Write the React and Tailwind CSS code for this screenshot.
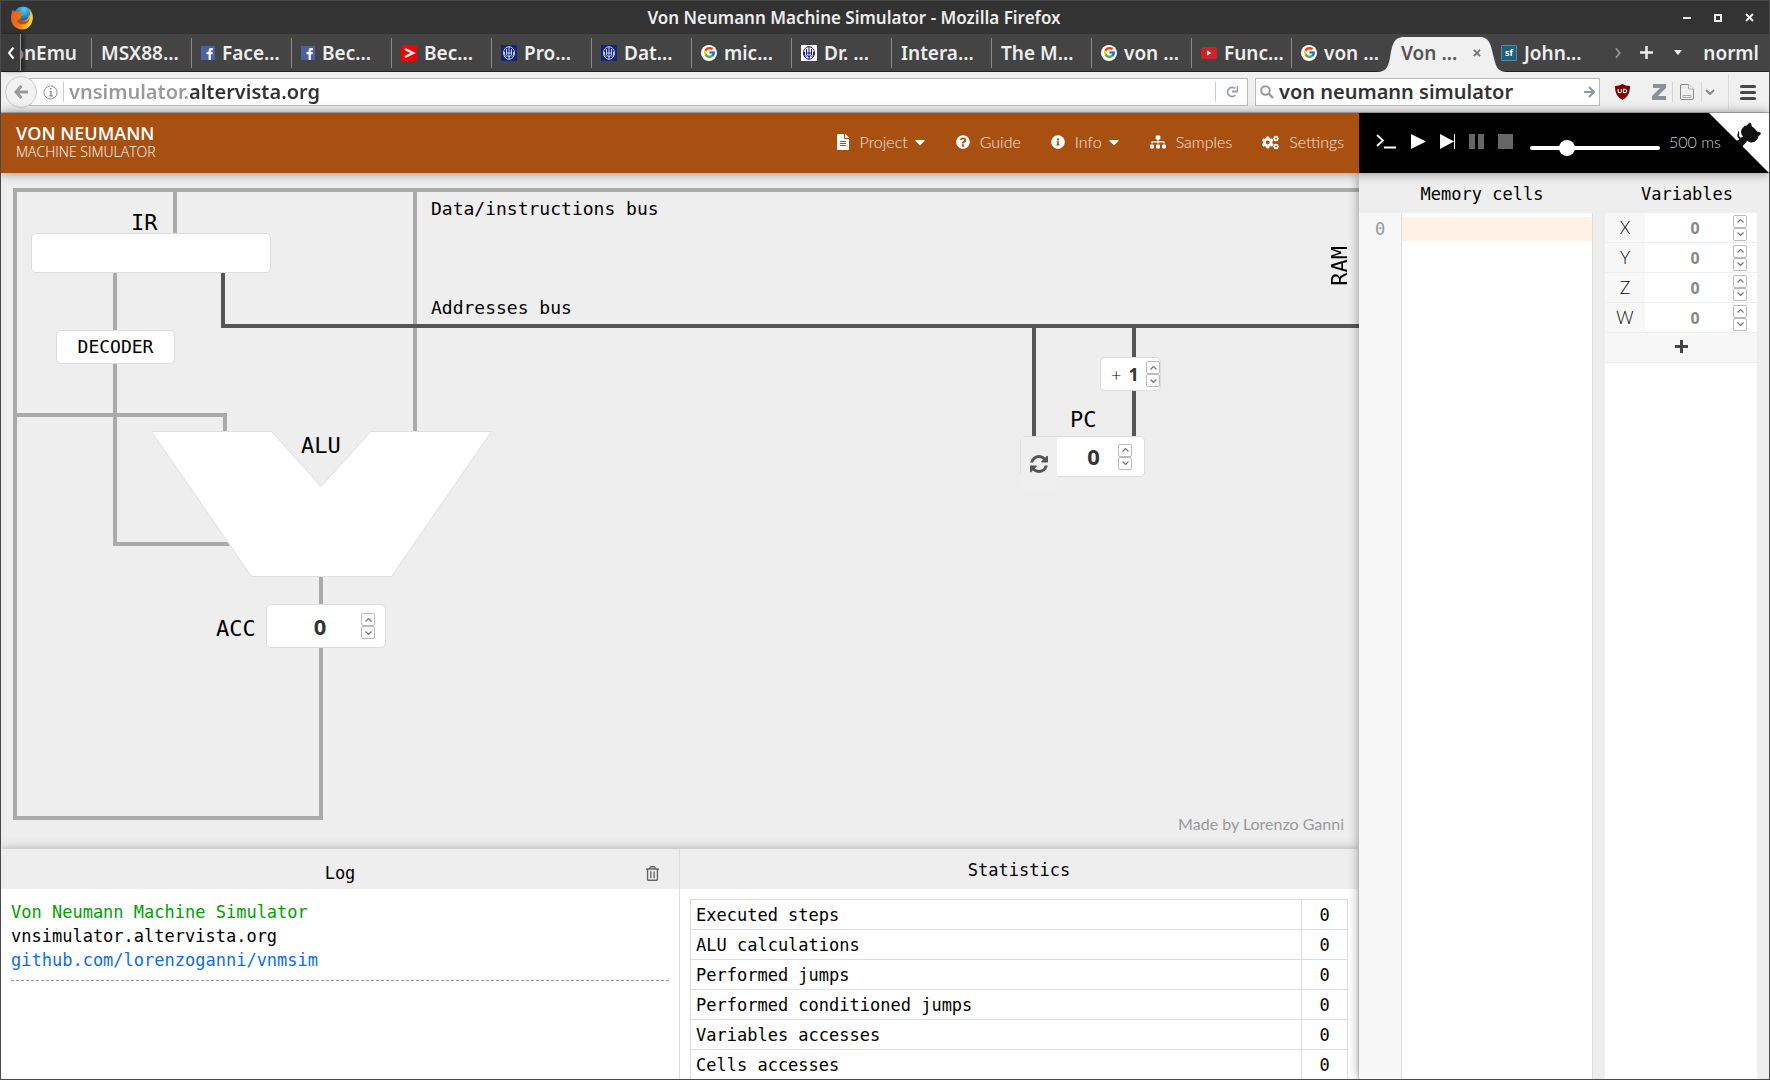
import React from "react";
import { FaFileAlt, FaQuestionCircle, FaInfoCircle, FaCaretDown, FaSitemap, FaCogs, FaRegTrashAlt } from "react-icons/fa";
import { FcGoogle } from "react-icons/fc";

const ui = "font-['Noto_Sans','Open_Sans',sans-serif]";
const mono = "font-['DejaVu_Sans_Mono','Liberation_Mono',monospace]";

function FirefoxLogo() {
  return (
    <svg viewBox="0 0 24 26" className="h-[26px] w-6" aria-hidden="true">
      <defs>
        <radialGradient id="globe" cx="55%" cy="15%" r="80%">
          <stop offset="0" stopColor="#4fd3f5" />
          <stop offset="0.5" stopColor="#1a7fc4" />
          <stop offset="1" stopColor="#12285e" />
        </radialGradient>
        <linearGradient id="fox" x1="0" y1="0" x2="1" y2="0.3">
          <stop offset="0" stopColor="#e2571e" />
          <stop offset="0.6" stopColor="#ee7a1a" />
          <stop offset="1" stopColor="#fbd43a" />
        </linearGradient>
      </defs>
      <circle cx="13" cy="11.5" r="10" fill="url(#globe)" />
      <path d="M3 4.500c.3 1 .8 1.600 1.500 2 1.200-.4 2.600-.3 3.800.2 1-.7 2-1 3-.9-.9.7-1.300 1.600-1.200 2.500 1.100.4 2.300.3 3.200.7.200 1.200-1.400 2-2.700 2.800.3 1.400-.2 2-.8 2.400 1.600 2.200 4.800 1.800 6.600.6 1.700-1.200 2.700-3.300 2.300-5.400.6.500.9 1.100 1.100 1.800.8-3-.2-6.200-2-8 3.300 1.900 5.200 5.800 5 10C22.500 19.700 18 24.500 12 24.500 5.600 24.500 1 19.500 1 13.300 1 10 1.700 6.500 3 4.500z" fill="url(#fox)" />
      <path d="M9.400 14.200c-1 .2-2.200 1-2.400 2 1.500 3 6 4 9 2.200 2.300-1.300 3.700-3.300 3.700-6-1.500 4.300-7.500 5.600-10.300 1.800z" fill="#c8441a" />
    </svg>
  );
}

function Crest({ inverse = false }) {
  return (
    <svg viewBox="0 0 16 16" className="size-4" aria-hidden="true">
      <rect width="16" height="16" fill={inverse ? "#fff" : "#12267a"} />
      <g fill="none" stroke={inverse ? "#12129a" : "#c5cdea"}>
        <ellipse cx="8" cy="8" rx="5.500" ry="6.300" />
        <path d="M8 2v12M5.500 4v6l2.500 2 2.500-2V4M3.500 7v3l2 2M12.500 7v3l-2 2M5.500 8h5" />
      </g>
    </svg>
  );
}

function TabIcon({ kind }) {
  if (kind === "fb")
    return (
      <svg viewBox="0 0 14 14" className="size-[14px]" aria-hidden="true">
        <rect width="14" height="14" fill="#4862a3" />
        <path d="M7.600 14V8.300H5.500V6h2.100V4.600C7.600 2.800 8.600 2 10.300 2h1.500v2.200h-1.100c-.7 0-.9.3-.9.900V6h2l-.3 2.300H9.800V14z" fill="#fff" />
      </svg>
    );
  if (kind === "code")
    return (
      <svg viewBox="0 0 16 16" className="size-4" aria-hidden="true">
        <rect width="16" height="16" rx="1" fill="#f80000" />
        <path d="M4 4l8 4-8 4" fill="none" stroke="#fff" strokeWidth="2.400" />
      </svg>
    );
  if (kind === "google")
    return (
      <span className="grid size-4 place-items-center rounded-full bg-white">
        <FcGoogle className="size-[13px]" />
      </span>
    );
  if (kind === "yt")
    return (
      <svg viewBox="0 0 16 12" className="h-3 w-4" aria-hidden="true">
        <rect width="16" height="12" rx="2" fill="#cf2227" />
        <path d="M6 3.500v5L10.500 6z" fill="#fff" />
      </svg>
    );
  if (kind === "sf")
    return <span className="grid size-4 place-items-center rounded-[1px] border border-[#4f8aa8] bg-[#21607f] text-[9px] leading-none font-bold text-white">sf</span>;
  return <Crest inverse={kind === "crest2"} />;
}

const tabs = [
  ["MSX88..."], ["Face...", "fb"], ["Bec...", "fb"], ["Bec...", "code"], ["Pro...", "crest"], ["Dat...", "crest"],
  ["mic...", "google"], ["Dr. ...", "crest2"], ["Intera..."], ["The M..."], ["von ...", "google"], ["Func...", "yt"], ["von ...", "google"],
];

function TitleBar() {
  return (
    <div className="flex h-[33px] shrink-0 items-center bg-[#333] px-[9px] text-[#eee]">
      <div className="flex w-[90px]"><FirefoxLogo /></div>
      <h1 className="flex-1 text-center text-[17px] leading-6 font-semibold">Von Neumann Machine Simulator - Mozilla Firefox</h1>
      <div className="flex w-[152px] items-center justify-end gap-[17px] pr-1">
        <button aria-label="Minimize" className="grid size-[14px] place-items-center"><span className="h-[2px] w-2 bg-[#eee]" /></button>
        <button aria-label="Maximize" className="grid size-[14px] place-items-center"><span className="size-2 border-2 border-[#eee]" /></button>
        <button aria-label="Close" className="grid size-[14px] place-items-center">
          <svg viewBox="0 0 9 9" className="size-[9px]"><path d="M1 1l7 7M8 1L1 8" stroke="#eee" strokeWidth="2" /></svg>
        </button>
      </div>
    </div>
  );
}

function TabBar() {
  return (
    <div className="flex h-[38px] shrink-0 items-center border-b border-[#222] bg-[#444] text-[19px] leading-7 font-semibold text-[#eee]">
      <button aria-label="Scroll tabs left" className="z-10 grid h-full w-5 shrink-0 place-items-center border-r border-[#999] bg-[#3c3c3c] shadow-[3px_0_4px_rgba(0,0,0,0.5)]">
        <svg viewBox="0 0 8 14" className="h-[14px] w-2"><path d="M6.500 1.500L2 7l4.500 5.500" fill="none" stroke="#fff" strokeWidth="2" /></svg>
      </button>
      <button className="flex h-[30px] w-[71px] shrink-0 items-center justify-end overflow-hidden border-r border-[#888] pr-[14px] whitespace-nowrap">onEmu</button>
      {tabs.map(([label, icon], i) => (
        <button key={i} className={"flex h-[30px] w-[100px] shrink-0 items-center gap-[7px] overflow-hidden pl-[9px] whitespace-nowrap " + (i === tabs.length - 1 ? "" : "border-r border-[#888]")}>
          {icon && <TabIcon kind={icon} />}
          {label}
        </button>
      ))}
      <div className="relative flex h-full w-[100px] shrink-0 items-center pl-[9px] text-[#555]">
        <svg viewBox="0 0 130 36" className="absolute bottom-[-1px] left-[-15px] h-9 w-[130px]" aria-hidden="true">
          <path d="M0 36C9 36 11 31 13 22C15 10 16 1 27 1H103C113 1 114 10 117 22C119 31 121 36 130 36Z" fill="#f0f0f0" />
        </svg>
        <button className="relative whitespace-nowrap">Von ...</button>
        <button aria-label="Close tab" className="relative mr-[10px] ml-auto grid size-[10px] place-items-center">
          <svg viewBox="0 0 9 9" className="size-2"><path d="M1 1l7 7M8 1L1 8" stroke="#777" strokeWidth="2.200" /></svg>
        </button>
      </div>
      <button className="relative flex h-[30px] w-[100px] shrink-0 items-center gap-[7px] pl-[9px] whitespace-nowrap"><TabIcon kind="sf" />John...</button>
      <div className="ml-auto flex items-center pr-[10px]">
        <button aria-label="Scroll tabs right" className="grid h-5 w-7 place-items-center">
          <svg viewBox="0 0 8 14" className="h-3 w-2"><path d="M1.500 1.500L6 7l-4.500 5.500" fill="none" stroke="#999" strokeWidth="2" /></svg>
        </button>
        <button aria-label="New tab" className="grid h-5 w-7 place-items-center">
          <svg viewBox="0 0 13 13" className="size-[13px]"><path d="M6.500 0v13M0 6.500h13" stroke="#eee" strokeWidth="2.500" /></svg>
        </button>
        <button aria-label="List all tabs" className="mr-[7px] grid h-5 w-9 place-items-center">
          <svg viewBox="0 0 8 5" className="h-[5px] w-2"><path d="M0 0h8L4 5z" fill="#fff" /></svg>
        </button>
        <button>norml</button>
      </div>
    </div>
  );
}

function UrlBar() {
  return (
    <div className="flex h-[41px] shrink-0 items-center border-b border-[#bbb] bg-[#f0f0f0] text-[20px] leading-6 font-semibold">
      <button aria-label="Back" className="z-10 ml-1 grid size-8 shrink-0 place-items-center rounded-full border border-[#ccc] bg-[#f2f2f2]">
        <svg viewBox="0 0 14 14" className="size-[14px]"><path d="M7.500 1L2 7l5.500 6M2 7h12" fill="none" stroke="#999" strokeWidth="3" /></svg>
      </button>
      <div className="-ml-2 flex h-7 min-w-0 flex-1 items-center border border-[#bbb] bg-white pl-[13px]">
        <svg viewBox="0 0 16 16" className="size-[15px] shrink-0" aria-hidden="true">
          <circle cx="8" cy="8" r="7" fill="none" stroke="#888" />
          <path d="M7 7h1.500v4M6.500 11.500h4M7.500 4h1.500" fill="none" stroke="#888" strokeWidth="1.400" />
        </svg>
        <span className="mx-[5px] h-5 w-px bg-[#ccc]" />
        <input aria-label="Address" defaultValue="vnsimulator.altervista.org" className="min-w-0 flex-1 bg-linear-to-r from-[#999] from-[121px] to-[#333] to-[121px] bg-clip-text text-transparent outline-none" />
        <button aria-label="Reload" className="grid h-5 w-8 place-items-center border-l border-[#ccc]">
          <svg viewBox="0 0 12 12" className="size-3"><path d="M9 2.500A4.500 4.500 0 1 0 9.500 9" fill="none" stroke="#93a0ab" strokeWidth="1.800" /><path d="M11.500 0v5.500H6" fill="none" stroke="#93a0ab" strokeWidth="1.800" /></svg>
        </button>
      </div>
      <div className="ml-[7px] flex h-7 w-[345px] shrink-0 items-center border border-[#bbb] bg-white px-1">
        <svg viewBox="0 0 14 14" className="size-[14px] shrink-0" aria-hidden="true"><circle cx="5.500" cy="5.500" r="4.300" fill="none" stroke="#999" strokeWidth="2" /><path d="M8.500 8.500L13 13" stroke="#999" strokeWidth="2.400" /></svg>
        <input aria-label="Search" defaultValue="von neumann simulator" className="ml-[5px] min-w-0 flex-1 text-[#333] outline-none" />
        <button aria-label="Go">
          <svg viewBox="0 0 11 12" className="h-3 w-[11px]"><path d="M0 6h9M5 1l5 5-5 5" fill="none" stroke="#8b98a5" strokeWidth="2" /></svg>
        </button>
      </div>
      <button aria-label="uBlock" className="ml-[14px] grid h-5 w-4 place-items-center">
        <svg viewBox="0 0 15 16" className="h-4 w-[15px]"><path d="M7.500 0Q10.500 2 15 2C15 9 13 13 7.500 16C2 13 0 9 0 2Q4.500 2 7.500 0z" fill="#800000" /><path d="M3.200 5v2.300q0 1.400 1.600 1.400t1.600-1.400V5M8.500 8.500V5.300h1q2 0 2 1.700t-2 1.600z" fill="none" stroke="#fff" strokeWidth="1.100" /></svg>
      </button>
      <button aria-label="Zotero" className="ml-[21px] grid h-5 w-4 place-items-center">
        <svg viewBox="0 0 14 16" className="h-4 w-[14px]"><path d="M1 0h13v4L6 12h8v4H0v-4l8-8H1z" fill="#8a9097" /></svg>
      </button>
      <button aria-label="Save page" className="ml-[5px] flex h-5 items-center border-x border-[#d4d4d4] px-[7px]">
        <svg viewBox="0 0 14 16" className="h-4 w-[14px]"><path d="M.5 2q0-1.500 1.500-1.500h6.500l5 4.500v9q0 1.500-1.500 1.500H2Q.5 15.500.5 14z" fill="#f0f0f0" stroke="#888" /><path d="M8.500.5V5h5" fill="#fff" stroke="#aaa" /><path d="M3 11.500h8v2H3z" fill="#fff" stroke="#aaa" /></svg>
      </button>
      <button aria-label="More save options" className="ml-[2px] grid h-5 w-3 place-items-center">
        <svg viewBox="0 0 10 6" className="h-[6px] w-[10px]"><path d="M1 1l4 4 4-4" fill="none" stroke="#888" strokeWidth="2" /></svg>
      </button>
      <span className="ml-3 h-9 w-px bg-[#ddd]" />
      <button aria-label="Menu" className="mr-[13px] ml-[11px] flex flex-col gap-[3px]">
        <span className="h-[3px] w-4 rounded-sm bg-[#484848]" />
        <span className="h-[3px] w-4 rounded-sm bg-[#484848]" />
        <span className="h-[3px] w-4 rounded-sm bg-[#484848]" />
      </button>
    </div>
  );
}

function NavItem({ icon: Icon, size, label, caret }) {
  return (
    <button className="flex items-center gap-[10px] text-white/85">
      <Icon className={size + " text-white"} />
      <span className="flex items-center gap-[6px]">
        {label}
        {caret && <FaCaretDown className="h-4 w-3 text-white" />}
      </span>
    </button>
  );
}

function GithubCorner() {
  return (
    <a href="https://github.com/lorenzoganni/vnmsim" aria-label="Source code on GitHub" className="absolute top-0 right-0">
      <svg viewBox="0 0 250 250" className="size-[60px]">
        <path d="M0 0L115 115H130L142 142L250 250V0Z" fill="#fff" />
        <path fill="#111" d="M128.300 109C113.800 99.700 119 89.600 119 89.600C122 82.700 120.500 78.600 120.500 78.600C119.200 72 123.400 76.300 123.400 76.300C127.300 80.900 125.500 87.300 125.500 87.300C122.900 97.600 130.600 101.900 134.400 103.200" />
        <path fill="#111" d="M115 115C114.900 115.100 118.700 116.500 119.800 115.400L133.700 101.600C136.900 99.200 139.900 98.400 142.200 98.600C133.800 88 127.500 74.400 143.800 58C148.500 53.400 154 51.200 159.700 51C160.300 49.400 163.200 43.600 171.400 40.100C171.400 40.100 176.100 42.500 178.800 56.200C183.100 58.600 187.200 61.800 190.900 65.400C194.500 69 197.700 73.200 200.100 77.600C213.800 80.200 216.300 84.900 216.300 84.900C212.700 93.100 206.900 96 205.400 96.600C205.100 102.400 203 107.800 198.300 112.500C181.900 128.900 168.300 122.500 157.700 114.100C157.900 116.900 156.700 120.900 152.700 124.900L141 136.500C139.800 137.700 141.600 141.900 141.800 141.800Z" />
      </svg>
    </a>
  );
}

function Header() {
  return (
    <header className="z-30 flex h-[60px] shrink-0 font-['Lato',sans-serif] text-[16px] leading-5 font-light shadow-[0_0_10px_rgba(0,0,0,0.45)]">
      <div className="flex flex-1 items-center justify-between bg-[#a85012] px-[15px] pb-[2px]">
        <a href="#home" className="flex flex-col font-['Open_Sans',sans-serif] text-white">
          <span className="text-[18px] leading-[19px] font-semibold">VON NEUMANN</span>
          <span className="text-[14px] leading-[17px] font-light">MACHINE SIMULATOR</span>
        </a>
        <nav className="flex items-center gap-[30px]">
          <NavItem icon={FaFileAlt} size="h-4 w-[14px]" label="Project" caret />
          <NavItem icon={FaQuestionCircle} size="size-[14px]" label="Guide" />
          <NavItem icon={FaInfoCircle} size="size-[14px]" label="Info" caret />
          <NavItem icon={FaSitemap} size="size-4" label="Samples" />
          <NavItem icon={FaCogs} size="size-[17px]" label="Settings" />
        </nav>
      </div>
      <div className="relative flex w-[410px] shrink-0 items-center bg-black pb-[3px] pl-[17px]">
        <button aria-label="Open console">
          <svg viewBox="0 0 20 15" className="h-[15px] w-5"><path d="M1 1l6 5.500L1 12M8 13.500h12" fill="none" stroke="#fff" strokeWidth="1.800" /></svg>
        </button>
        <button aria-label="Run" className="ml-[15px]"><svg viewBox="0 0 15 15" className="size-[15px]"><path d="M0 0l15 7.500L0 15z" fill="#fff" /></svg></button>
        <button aria-label="Step" className="ml-[14px]"><svg viewBox="0 0 15 15" className="size-[15px]"><path d="M0 0l14 7.500L0 15zM14 0h1v15h-1z" fill="#fff" /></svg></button>
        <button aria-label="Pause" className="ml-[14px]"><svg viewBox="0 0 15 15" className="size-[15px]"><path d="M0 0h6v15H0zM9 0h6v15H9z" fill="#666" /></svg></button>
        <button aria-label="Stop" className="ml-[14px]"><svg viewBox="0 0 15 15" className="size-[15px]"><path d="M0 0h15v15H0z" fill="#666" /></svg></button>
        <input id="speed" aria-label="Step delay" type="range" min="0" max="2000" defaultValue="500" className="mt-3 ml-[17px] h-4 w-[130px] appearance-none bg-transparent [&::-webkit-slider-runnable-track]:h-1 [&::-webkit-slider-runnable-track]:rounded-sm [&::-webkit-slider-runnable-track]:bg-white [&::-webkit-slider-thumb]:-mt-[6px] [&::-webkit-slider-thumb]:size-4 [&::-webkit-slider-thumb]:appearance-none [&::-webkit-slider-thumb]:rounded-full [&::-webkit-slider-thumb]:bg-white" />
        <output htmlFor="speed" className="ml-[9px] whitespace-nowrap text-[#ccc]">500 ms</output>
        <GithubCorner />
      </div>
    </header>
  );
}

function Spinner({ name }) {
  const cls = "grid h-[13px] w-[14px] place-items-center rounded-[2px] border border-[#bbb] bg-white";
  return (
    <span className="flex shrink-0 flex-col">
      <button aria-label={"Increase " + name} className={cls}>
        <svg viewBox="0 0 7 4" className="h-1 w-[7px]"><path d="M.5 3.500l3-3 3 3" fill="none" stroke="#777" strokeWidth="1.200" /></svg>
      </button>
      <button aria-label={"Decrease " + name} className={cls}>
        <svg viewBox="0 0 7 4" className="h-1 w-[7px]"><path d="M.5.500l3 3 3-3" fill="none" stroke="#777" strokeWidth="1.200" /></svg>
      </button>
    </span>
  );
}

const numberInput = "min-w-0 flex-1 appearance-none bg-transparent text-center font-bold outline-none";

function Diagram() {
  const box = "absolute rounded-[5px] border border-[#ddd] bg-white";
  return (
    <section aria-label="Machine diagram" className={"relative min-h-0 flex-1 overflow-hidden bg-[#eee] text-black " + mono}>
      <svg className="absolute inset-0 h-full w-full" aria-hidden="true">
        <g fill="#aaa">
          <rect x="12" y="15" width="100%" height="4" />
          <rect x="12" y="15" width="4" height="632" />
          <rect x="172" y="15" width="4" height="50" />
          <rect x="412" y="15" width="4" height="244" />
          <rect x="112" y="90" width="4" height="282" />
          <rect x="12" y="240" width="214" height="4" />
          <rect x="222" y="240" width="4" height="20" />
          <rect x="112" y="369" width="120" height="4" />
          <rect x="318" y="400" width="4" height="247" />
          <rect x="12" y="643" width="310" height="4" />
        </g>
        <g fill="#555">
          <rect x="220" y="90" width="4" height="65" />
          <rect x="220" y="151" width="100%" height="4" />
        </g>
        <path d="M150.500 258.500H270.500L320 313.500L370 258.500H490.500L390.500 403.500H250.500Z" fill="#fff" stroke="#e0e0e0" />
      </svg>
      <span className="absolute top-6 left-[430px] text-[18px] leading-6">Data/instructions bus</span>
      <span className="absolute top-[123px] left-[430px] text-[18px] leading-6">Addresses bus</span>
      <span className="absolute top-9 left-[130px] text-[22px] leading-7">IR</span>
      <div className={box + " top-[60px] left-[30px] h-10 w-[240px]"} />
      <div className={box + " top-[157px] left-[55px] grid h-[34px] w-[119px] place-items-center text-[18px] leading-6"}>DECODER</div>
      <span className="absolute top-[259px] left-[300px] text-[22px] leading-7">ALU</span>
      <label htmlFor="acc" className="absolute top-[442px] left-[215px] text-[22px] leading-7">ACC</label>
      <div className={box + " top-[431px] left-[265px] flex h-11 w-[120px] items-center pr-[10px]"}>
        <input id="acc" defaultValue="0" inputMode="numeric" className={numberInput + " pl-3 text-[22px] text-[#333] " + ui} />
        <Spinner name="ACC" />
      </div>
      <div className="absolute top-0 right-0 h-full w-[340px]">
        <svg className="absolute inset-0 h-full w-full" aria-hidden="true">
          <path d="M13 155h4v110h-4zM113 155h4v110h-4z" fill="#555" />
        </svg>
        <span className="absolute top-[73px] right-[5px] rotate-180 text-[22px] leading-7 [writing-mode:vertical-rl]">RAM</span>
        <div className={box + " top-[184px] left-[81px] flex h-[34px] w-[61px] items-center pl-[10px] text-[16px]"}>
          <label htmlFor="inc" className="font-['Lato',sans-serif] text-[18px] font-light">+</label>
          <input id="inc" defaultValue="1" inputMode="numeric" className={numberInput + " text-[18px] text-[#333] " + ui} />
          <Spinner name="increment" />
        </div>
        <label htmlFor="pc" className="absolute top-[233px] left-[51px] text-[22px] leading-7">PC</label>
        <div className={box + " top-[263px] left-[1px] flex h-[41px] w-[125px] items-center pr-3"}>
          <button aria-label="Reset PC" className="grid h-[54px] w-9 shrink-0 place-items-center self-start bg-[#efefef] text-[#555]">
            <svg viewBox="0 0 1536 1536" className="size-[18px]" fill="currentColor"><path d="M1511 928q0 5-1 7-64 268-268 434.500t-478 166.500q-146 0-282.500-55t-243.500-157l-129 129q-19 19-45 19t-45-19-19-45v-448q0-26 19-45t45-19h448q26 0 45 19t19 45-19 45l-137 137q71 66 161 102t187 36q134 0 250-65t186-179q11-17 53-117 8-23 30-23h192q13 0 22.500 9.500t9.500 22.500zm25-800v448q0 26-19 45t-45 19h-448q-26 0-45-19t-19-45 19-45l138-138q-148-137-349-137-134 0-250 65t-186 179q-11 17-53 117-8 23-30 23h-199q-13 0-22.500-9.500t-9.500-22.500v-7q65-268 270-434.500t480-166.500q146 0 284 55.500t245 156.500l130-129q19-19 45-19t45 19 19 45z" /></svg>
          </button>
          <input id="pc" defaultValue="0" inputMode="numeric" className={numberInput + " pl-3 text-[22px] text-[#333] " + ui} />
          <Spinner name="PC" />
        </div>
        <a href="#author" className="absolute right-[15px] bottom-[13px] font-['Lato',sans-serif] text-[16px] leading-6 whitespace-nowrap text-[#999]">Made by Lorenzo Ganni</a>
      </div>
    </section>
  );
}

const stats = ["Executed steps", "ALU calculations", "Performed jumps", "Performed conditioned jumps", "Variables accesses", "Cells accesses"];

function BottomPanels() {
  return (
    <div className={"z-10 flex h-[230px] shrink-0 overflow-clip bg-white text-[17px] leading-6 text-black shadow-[0_0_10px_rgba(0,0,0,0.3)] [overflow-clip-margin:12px] " + mono}>
      <section className="flex flex-1 flex-col border-r border-[#ddd]">
        <div className="flex h-10 shrink-0 items-center bg-[#eee] pt-2">
          <h2 className="flex-1 pl-[54px] text-center">Log</h2>
          <button aria-label="Clear log" className="grid w-[54px] place-items-center text-[#666]"><FaRegTrashAlt className="size-[15px]" /></button>
        </div>
        <div className="px-[10px] py-[11px]">
          <p className="text-[#00a000]">Von Neumann Machine Simulator</p>
          <p>vnsimulator.altervista.org</p>
          <p><a href="https://github.com/lorenzoganni/vnmsim" className="text-[#0a6cf5]">github.com/lorenzoganni/vnmsim</a></p>
          <hr className="mt-2 border-dashed border-[#999]" />
        </div>
      </section>
      <section className="flex h-[230px] flex-1 flex-col overflow-hidden border-r border-[#ddd]">
        <h2 className="h-10 shrink-0 bg-[#eee] pt-[9px] text-center">Statistics</h2>
        <div className="px-[10px] pt-[10px]">
          <table className="w-full border-collapse">
            <tbody>
              {stats.map((s) => (
                <tr key={s} className="h-[30px]">
                  <th scope="row" className="border border-[#ddd] px-[5px] text-left font-normal">{s}</th>
                  <td className="w-[46px] border border-[#ddd] text-center">0</td>
                </tr>
              ))}
            </tbody>
          </table>
        </div>
      </section>
    </div>
  );
}

function SidePanel() {
  return (
    <aside className={"z-20 flex w-[410px] shrink-0 bg-[#eee] text-[17px] leading-6 text-black shadow-[0_0_10px_rgba(0,0,0,0.4)] " + mono}>
      <section className="flex w-[234px] flex-col">
        <h2 className="h-10 shrink-0 pt-[9px] pl-3 text-center">Memory cells</h2>
        <div className="flex flex-1 border-r border-[#ddd] bg-white">
          <label htmlFor="cell0" className="w-[43px] shrink-0 border-r border-[#ddd] bg-[#f7f7f7] pt-1 text-center text-[#999]">0</label>
          <input id="cell0" className="mt-1 h-6 min-w-0 flex-1 bg-[#fff1e6] px-1 outline-none" />
        </div>
      </section>
      <section className="ml-3 flex w-[152px] flex-col">
        <h2 className="h-10 shrink-0 pt-[9px] pl-3 text-center">Variables</h2>
        <div className="flex-1 bg-white">
          {["X", "Y", "Z", "W"].map((v) => (
            <div key={v} className="flex h-[30px] items-center border-b border-[#eee] pr-[10px]">
              <label htmlFor={"var-" + v} className="h-full w-10 shrink-0 bg-[#f7f7f7] pt-[3px] text-center font-['Lato',sans-serif] text-[17px] font-light">{v}</label>
              <input id={"var-" + v} defaultValue="0" inputMode="numeric" className={numberInput + " pl-3 text-[16px] text-[#888] " + ui} />
              <Spinner name={v} />
            </div>
          ))}
          <button aria-label="Add variable" className="grid h-[30px] w-full place-items-center border-b border-[#eee] bg-[#f7f7f7] pb-[2px] text-[#444]">
            <svg viewBox="0 0 13 13" className="size-[13px]"><path d="M5 0h3v5h5v3H8v5H5V8H0V5h5z" fill="currentColor" /></svg>
          </button>
        </div>
      </section>
    </aside>
  );
}

export default function App() {
  return (
    <div className={"flex h-screen flex-col overflow-hidden border border-[#4a4a4a] bg-[#eee] " + ui}>
      <TitleBar />
      <TabBar />
      <UrlBar />
      <Header />
      <main className="flex min-h-0 flex-1">
        <div className="flex min-w-0 flex-1 flex-col">
          <Diagram />
          <BottomPanels />
        </div>
        <SidePanel />
      </main>
    </div>
  );
}
